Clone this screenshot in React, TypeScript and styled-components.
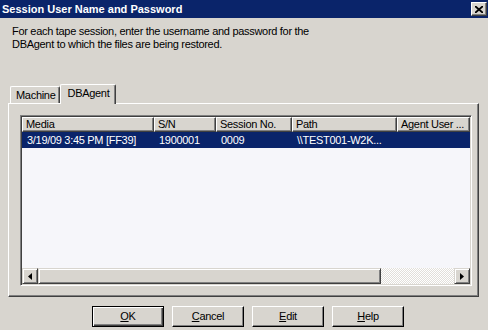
import React from 'react';
import styled, { createGlobalStyle } from 'styled-components';

const face = '#d8d5cf';
const navy = '#0a246a';

const GlobalStyle = createGlobalStyle`
    html, body {
        margin: 0;
        padding: 0;
        background: ${face};
    }
    body {
        font-family: 'Liberation Sans', Arial, sans-serif;
        font-size: 11px;
        letter-spacing: -0.3px;
        color: #000;
    }
`;

const Dialog = styled.div`
    width: 488px;
    height: 330px;
    background: ${face};
    display: flex;
    flex-direction: column;
    overflow: hidden;
`;

const TitleBar = styled.div`
    height: 18px;
    background: ${navy};
    display: flex;
    align-items: center;
    justify-content: space-between;
    padding: 0 1px 0 2px;
    box-sizing: border-box;
`;

const Title = styled.span`
    color: #fff;
    font-weight: bold;
    font-size: 11px;
    letter-spacing: 0;
`;

const CloseButton = styled.div`
    width: 14px;
    height: 12px;
    background: ${face};
    border: 1px solid;
    border-color: #fff #404040 #404040 #fff;
    box-shadow: inset -1px -1px 0 #808080;
    display: flex;
    align-items: center;
    justify-content: center;
`;

const Body = styled.div`
    padding: 0 8px;
    display: flex;
    flex-direction: column;
`;

const Description = styled.p`
    margin: 7px 0 0 4px;
    line-height: 13px;
    width: 310px;
`;

const TabStrip = styled.div`
    display: flex;
    align-items: flex-end;
    margin: 32px 0 0 2px;
    height: 20px;
    position: relative;
    z-index: 1;
`;

const Tab = styled.div<{ $active?: boolean }>`
    box-sizing: border-box;
    height: ${(p) => (p.$active ? '20px' : '17px')};
    padding: ${(p) => (p.$active ? '2px 6px 0 6px' : '2px 4px 0 5px')};
    margin-bottom: ${(p) => (p.$active ? '-1px' : '0')};
    background: ${face};
    border-top: 1px solid #fff;
    border-left: 1px solid #fff;
    border-right: 1px solid #404040;
    box-shadow: inset -1px 0 0 #808080;
    border-radius: 2px 2px 0 0;
    line-height: 13px;
`;

const Panel = styled.div`
    box-sizing: border-box;
    width: 471px;
    height: 194px;
    border: 1px solid;
    border-color: #fff #404040 #404040 #fff;
    box-shadow: inset -1px -1px 0 #808080;
    padding: 11px 0 0 11px;
`;

const ListBox = styled.div`
    box-sizing: border-box;
    width: 452px;
    height: 171px;
    border: 1px solid;
    border-color: #808080 #fff #fff #808080;
    box-shadow: inset 1px 1px 0 #404040, inset -1px -1px 0 ${face};
    padding: 1px;
    background: #f6f6fa;
    display: flex;
    flex-direction: column;
`;

const columns = '132px 62px 76px 105px 73px';

const HeaderRow = styled.div`
    display: grid;
    grid-template-columns: ${columns};
    height: 15px;
`;

const HeaderCell = styled.div`
    box-sizing: border-box;
    background: ${face};
    border: 1px solid;
    border-color: #fff #404040 #404040 #fff;
    box-shadow: inset -1px -1px 0 #808080;
    padding: 0 0 0 3px;
    line-height: 13px;
    white-space: nowrap;
    overflow: hidden;
`;

const Rows = styled.div`
    flex: 1;
`;

const Row = styled.div<{ $selected?: boolean }>`
    display: grid;
    grid-template-columns: ${columns};
    height: 16px;
    line-height: 16px;
    background: ${(p) => (p.$selected ? navy : 'transparent')};
    color: ${(p) => (p.$selected ? '#fff' : '#000')};
`;

const Cell = styled.div`
    padding-left: 5px;
    white-space: nowrap;
    overflow: hidden;
`;

const ScrollBar = styled.div`
    display: flex;
    height: 16px;
`;

const ScrollButton = styled.div`
    box-sizing: border-box;
    width: 16px;
    height: 16px;
    background: ${face};
    border: 1px solid;
    border-color: ${face} #404040 #404040 ${face};
    box-shadow: inset 1px 1px 0 #fff, inset -1px -1px 0 #808080;
    display: flex;
    align-items: center;
    justify-content: center;
`;

const Thumb = styled(ScrollButton)`
    width: 343px;
`;

const Track = styled.div`
    flex: 1;
    background: repeating-conic-gradient(#fff 0 25%, #e2dfda 0 50%) 0 0 / 2px 2px;
`;

const ButtonRow = styled.div`
    display: flex;
    gap: 8px;
    margin: 9px 0 0 84px;
`;

const Button = styled.div<{ $default?: boolean }>`
    box-sizing: border-box;
    width: 72px;
    height: 21px;
    background: ${face};
    border: 1px solid;
    border-color: ${(p) => (p.$default ? '#000' : '#fff')} #000 #000 ${(p) => (p.$default ? '#000' : '#fff')};
    box-shadow: ${(p) =>
        p.$default
            ? 'inset 1px 1px 0 #fff, inset -1px -1px 0 #404040, inset -2px -2px 0 #808080'
            : 'inset -1px -1px 0 #808080'};
    display: flex;
    align-items: center;
    justify-content: center;
    line-height: 13px;

    u {
        text-decoration-thickness: 1px;
        text-underline-offset: 1px;
    }
`;

const Arrow = ({ dir }: { dir: 'left' | 'right' }) => (
    <svg width="4" height="7" viewBox="0 0 4 7">
        {dir === 'left' ? <path d="M4 0 L0 3.5 L4 7 Z" fill="#000" /> : <path d="M0 0 L4 3.5 L0 7 Z" fill="#000" />}
    </svg>
);

const CloseIcon = () => (
    <svg width="8" height="7" viewBox="0 0 8 7">
        <path d="M0 0 L8 7 M8 0 L0 7" stroke="#000" strokeWidth="1.8" />
    </svg>
);

export default function App() {
    return (
        <>
            <GlobalStyle />
            <Dialog>
                <TitleBar>
                    <Title>Session User Name and Password</Title>
                    <CloseButton>
                        <CloseIcon />
                    </CloseButton>
                </TitleBar>
                <Body>
                    <Description>
                        For each tape session, enter the username and password for the DBAgent to which the files are
                        being restored.
                    </Description>
                    <TabStrip>
                        <Tab>Machine</Tab>
                        <Tab $active>DBAgent</Tab>
                    </TabStrip>
                    <Panel>
                        <ListBox>
                            <HeaderRow>
                                <HeaderCell>Media</HeaderCell>
                                <HeaderCell>S/N</HeaderCell>
                                <HeaderCell>Session No.</HeaderCell>
                                <HeaderCell>Path</HeaderCell>
                                <HeaderCell>Agent User ...</HeaderCell>
                            </HeaderRow>
                            <Rows>
                                <Row $selected>
                                    <Cell>3/19/09 3:45 PM [FF39]</Cell>
                                    <Cell>1900001</Cell>
                                    <Cell>0009</Cell>
                                    <Cell>\\TEST001-W2K...</Cell>
                                    <Cell></Cell>
                                </Row>
                            </Rows>
                            <ScrollBar>
                                <ScrollButton>
                                    <Arrow dir="left" />
                                </ScrollButton>
                                <Thumb />
                                <Track />
                                <ScrollButton>
                                    <Arrow dir="right" />
                                </ScrollButton>
                            </ScrollBar>
                        </ListBox>
                    </Panel>
                    <ButtonRow>
                        <Button $default>
                            <span>
                                <u>O</u>K
                            </span>
                        </Button>
                        <Button>
                            <span>
                                <u>C</u>ancel
                            </span>
                        </Button>
                        <Button>
                            <span>
                                <u>E</u>dit
                            </span>
                        </Button>
                        <Button>
                            <span>
                                <u>H</u>elp
                            </span>
                        </Button>
                    </ButtonRow>
                </Body>
            </Dialog>
        </>
    );
}
